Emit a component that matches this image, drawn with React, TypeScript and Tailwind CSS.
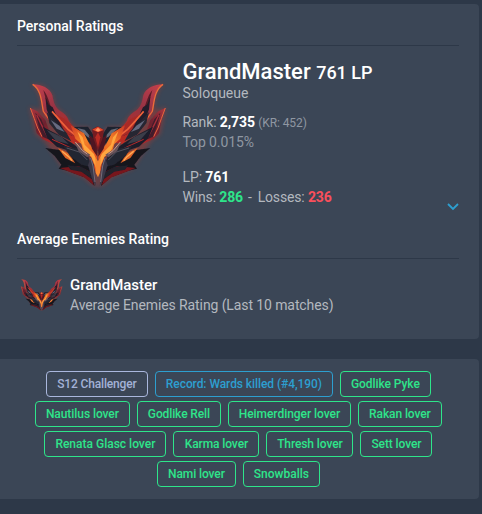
import React from "react";

function WingHalf() {
  return (
    <g>
      <path d="M232 352 L216 345 L190 322 L150 306 L128 296 L98 250 L72 212 L46 192 L28 112 L62 120 L62 92 L50 60 L34 42 L70 46 L98 72 L106 108 L138 136 L164 170 L205 172 L232 200Z" fill="#d6301f" opacity="0.35" filter="url(#soft)" />
      <g filter="url(#paint)">
        <path d="M31 114 L52 124 L76 150 L88 184 L120 216 L108 226 L68 208 L50 190 L42 150Z" fill="url(#lower)" />
        <path d="M31 114 Q44 148 53 174 L66 200" fill="none" stroke="#e5653f" strokeWidth="3" />
        <path d="M46 128 L64 148 L80 190 L98 214 L68 200 L56 166Z" fill="#431c2a" />
        <path d="M50 134 L64 164 L84 202" fill="none" stroke="#a82e3a" strokeWidth="4" />
        <path d="M36 43 C62 42 90 54 97 76 C100 94 104 108 114 118 C126 128 140 132 146 152 L166 180 L190 216 L160 222 L118 190 L76 142 C62 118 68 92 60 70 C54 54 44 46 36 43Z" fill="url(#upper)" />
        <path d="M38 43 C64 60 64 94 70 124 L92 154" fill="none" stroke="#ec6c3a" strokeWidth="4" />
        <path d="M70 60 C92 86 88 126 120 150 L158 198 L126 184 L90 144 L82 104Z" fill="#591a28" />
        <path d="M76 80 L86 104 L98 112 L114 146 L130 182 L92 150 L80 118Z" fill="#211b29" />
        <path d="M106 132 L136 148 L166 174 L174 204 L136 188 L122 160Z" fill="#a92c28" />
        <path d="M96 124 L122 154 L144 178 L170 198" fill="none" stroke="#ee613a" strokeWidth="5" />
        <path d="M80 126 L108 156 L138 186 L154 214 L116 194 L88 160Z" fill="#262632" />
        <path d="M92 150 L118 167 L134 186 L110 176Z" fill="#666b80" />
        <path d="M68 170 L106 190 L154 218 L190 244 L170 250 L110 230 L82 204Z" fill="#1d1d29" />
        <path d="M80 180 L126 202 L146 222 L108 212Z" fill="#3b3d4a" />
        <path d="M96 208 L132 224 L166 240" fill="none" stroke="#b52a2c" strokeWidth="3" />
        <path d="M76 234 L118 240 L174 260 L208 286 L224 348 L194 322 L142 302 L116 296 L124 284 L104 258Z" fill="#15161f" />
        <path d="M114 234 L146 250 L166 280 L136 264Z" fill="#df6527" />
        <path d="M126 244 L146 260 L156 272" fill="none" stroke="#ffad57" strokeWidth="4" />
        <path d="M130 228 L176 236 L204 258 L216 292 L184 284 L150 258Z" fill="#242530" />
        <path d="M140 234 L178 246 L202 270" fill="none" stroke="#515360" strokeWidth="3" />
        <path d="M120 294 L176 288 L208 304 L222 346 L192 322 L150 306Z" fill="#78151b" />
        <path d="M142 286 L184 290 L210 306 L219 330 L184 305 L152 299Z" fill="#20202c" />
        <path d="M160 171 L204 170 L232 212 L232 244 L198 208Z" fill="#1e222d" />
        <path d="M172 174 L194 179 L220 210 L202 200Z" fill="#666a78" />
        <path d="M152 166 L192 190 L208 222 L232 250 L232 316 L222 294 L214 262 L190 244 L184 222 L166 206Z" fill="url(#gold)" />
        <path d="M172 184 L188 202 L194 224 L222 252 L232 276 L232 304 L214 260 L194 242Z" fill="#ffa640" />
        <path d="M162 212 L184 236 L211 254 L202 262 L176 244Z" fill="#68525a" />
        <path d="M166 216 L188 242 L202 252" fill="none" stroke="#d19a83" strokeWidth="3" />
        <path d="M206 194 L232 214 L232 260 L216 236Z" fill="#4d1722" />
        <path d="M212 262 L222 284 L228 348 L218 332 L204 286Z" fill="#3b3747" />
        <path d="M212 264 L219 288 L225 336" fill="none" stroke="#746d7b" strokeWidth="3" />
      </g>
    </g>
  );
}

function Emblem({ className }: { className: string }) {
  return (
    <svg viewBox="0 0 465 375" className={className} aria-label="GrandMaster emblem">
      <defs>
        <filter id="soft" x="-20%" y="-20%" width="140%" height="140%">
          <feGaussianBlur stdDeviation="6" />
        </filter>
        <filter id="paint"><feGaussianBlur stdDeviation="1.3" /></filter>
        <linearGradient id="upper" x1="0" y1="0" x2="0.65" y2="1">
          <stop stopColor="#c8404c" /><stop offset="0.45" stopColor="#963344" /><stop offset="1" stopColor="#b92b22" />
        </linearGradient>
        <linearGradient id="lower" x1="0" y1="0" x2="0.7" y2="1">
          <stop stopColor="#ad353f" /><stop offset="0.5" stopColor="#6c202f" /><stop offset="1" stopColor="#b1292a" />
        </linearGradient>
        <linearGradient id="gold" x1="0" y1="0" x2="0.5" y2="1">
          <stop stopColor="#cf3925" /><stop offset="0.45" stopColor="#f48129" /><stop offset="1" stopColor="#df4c21" />
        </linearGradient>
      </defs>
      <WingHalf />
      <g transform="translate(467 0) scale(-1 1)"><WingHalf /></g>
      <path d="M216 178 L233 169 L252 179 L249 201 L234 242 L220 204Z" fill="#741c21" />
      <path d="M217 179 L234 170 L251 180 L234 187Z" fill="#e1472a" />
      <path d="M226 181 L234 173 L242 181 L234 185Z" fill="#ff9460" />
      <path d="M234 187 L226 202 L234 232 L241 202Z" fill="#b82b24" />
      <path d="M226 262 L234 274 L242 262 L240 308 L234 322 L227 308Z" fill="#f78731" />
    </svg>
  );
}

type TagData = { label: string; size: string; tone?: string };
const rows: TagData[][] = [
  [
    { label: "S12 Challenger", size: "w-[102px] tracking-[-0.15px]", tone: "border-[#aab7dd] text-[#a3b2d6]" },
    { label: "Record: Wards killed (#4,190)", size: "w-[178px] tracking-[-0.07px]", tone: "border-[#2d9fd0] text-[#2d9fd0]" },
    { label: "Godlike Pyke", size: "w-[91px] tracking-[-0.07px]" },
  ],
  [
    { label: "Nautilus lover", size: "w-[95px] tracking-[-0.07px]" },
    { label: "Godlike Rell", size: "w-[84px] tracking-[-0.12px]" },
    { label: "Heimerdinger lover", size: "w-[123px] tracking-[-0.05px]" },
    { label: "Rakan lover", size: "w-[84px] tracking-[-0.1px]" },
  ],
  [
    { label: "Renata Glasc lover", size: "w-[122px]" },
    { label: "Karma lover", size: "w-[86px] tracking-[-0.1px]" },
    { label: "Thresh lover", size: "w-[87px] tracking-[-0.1px]" },
    { label: "Sett lover", size: "w-[72px] tracking-[-0.1px]" },
  ],
  [
    { label: "Nami lover", size: "w-[79px] tracking-[-0.1px]" },
    { label: "Snowballs", size: "w-[77px]" },
  ],
];

function SectionTitle({ children }: { children: React.ReactNode }) {
  return <h2 className="h-[30px] border-b border-[#2d3848] text-sm leading-5 font-medium text-white">{children}</h2>;
}

export default function App() {
  return (
    <main className="h-[514px] w-[482px] overflow-hidden bg-[#2d3848] pt-1 font-[Roboto,sans-serif] text-sm text-[#b3b8bf]">
      <section className="h-[335px] w-[479px] rounded-r bg-[#3b4656] pt-3 pr-5 pl-[17px]">
        <SectionTitle>Personal Ratings</SectionTitle>
        <div className="flex h-[183px] pt-6">
          <Emblem className="ml-[3px] h-[125px] w-[155px] shrink-0" />
          <div className="-mt-[11px] ml-[7.5px] flex-1 whitespace-nowrap">
            <div className="h-6 text-[22px] leading-[26px] font-medium text-white">
              GrandMaster <span className="text-[18px]">761 LP</span>
            </div>
            <div className="leading-5">Soloqueue</div>
            <div className="mt-[9px] leading-5 tracking-[-0.1px]">Rank: <b className="font-bold text-white">2,735</b> <span className="text-xs text-[#8f97a2]">(KR: 452)</span></div>
            <div className="leading-5 tracking-[-0.1px] text-[#8f97a2]">Top 0.015%</div>
            <div className="mt-[15px] leading-5 tracking-[-0.1px]">LP: <b className="font-bold text-white">761</b></div>
            <div className="leading-5 tracking-[-0.15px]">Wins: <b className="mr-[5px] text-[#2ee58a]">286</b>-<span className="ml-[6px]">Losses:</span> <b className="text-[#fa4f5b]">236</b></div>
          </div>
          <svg className="mt-[133px] h-[8px] w-3 shrink-0" viewBox="0 0 12 8" fill="none" stroke="#2d9fd0" strokeWidth="1.8">
            <path d="M1 1 L6 6 L11 1" />
          </svg>
        </div>
        <SectionTitle>Average Enemies Rating</SectionTitle>
        <div className="flex pt-4">
          <Emblem className="ml-px h-[38px] w-[47px] shrink-0" />
          <div className="ml-[5px] leading-5">
            <div className="text-[15px] font-medium text-white">GrandMaster</div>
            <div className="tracking-[-0.1px]">Average Enemies Rating (Last 10 matches)</div>
          </div>
        </div>
      </section>
      <section className="mt-5 flex h-[140px] w-[479px] flex-col gap-1 rounded-r bg-[#3b4656] pt-3 pr-[2.2px]">
        {rows.map((row, i) => (
          <div key={i} className="flex justify-center gap-[7px]">
            {row.map(({ label, size, tone }) => (
              <span key={label} className={`h-[26px] shrink-0 rounded border text-center text-xs leading-6 font-medium whitespace-nowrap ${size} ${tone ?? "border-[#2ee58a] text-[#2ee58a]"}`}>
                {label}
              </span>
            ))}
          </div>
        ))}
      </section>
    </main>
  );
}
